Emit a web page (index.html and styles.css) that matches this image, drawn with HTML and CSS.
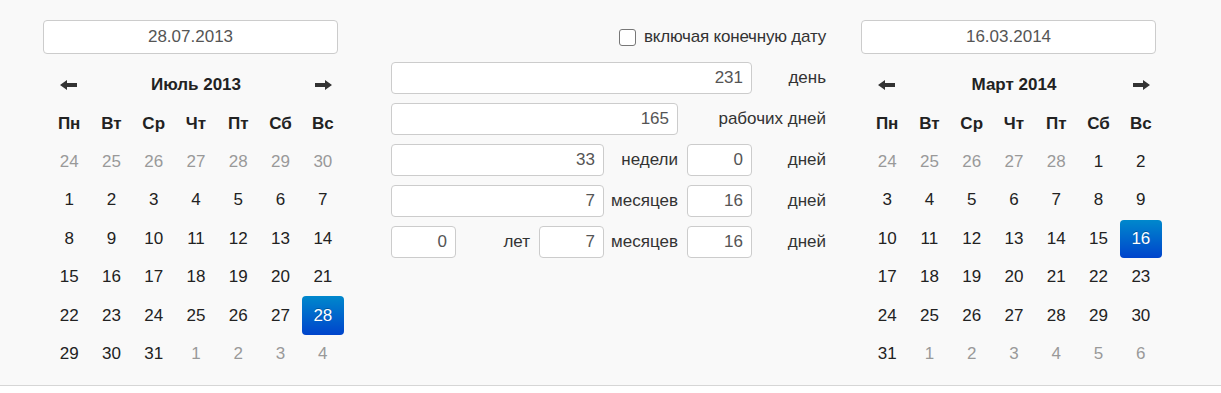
FILE: index.html
```html
<!DOCTYPE html>
<html>
<head>
  <title>Калькулятор дат</title>
  <link rel="stylesheet" href="styles.css">
</head>
<body>
  <div class="panel">
    <div class="cal-col">
      <input class="date-input" type="text" value="28.07.2013">
      <table class="calendar">
        <thead>
          <tr>
            <th class="nav"><svg width="18" height="10" viewBox="0 0 18 10"><path d="M0 5 L7 0 L7 3 L17 3 L17 7 L7 7 L7 10 Z" fill="#333"/></svg></th>
            <th class="switch" colspan="5">Июль 2013</th>
            <th class="nav"><svg width="18" height="10" viewBox="0 0 18 10"><path d="M18 5 L11 0 L11 3 L1 3 L1 7 L11 7 L11 10 Z" fill="#333"/></svg></th>
          </tr>
          <tr class="dow">
            <th>Пн</th><th>Вт</th><th>Ср</th><th>Чт</th><th>Пт</th><th>Сб</th><th>Вс</th>
          </tr>
        </thead>
        <tbody>
          <tr><td class="old">24</td><td class="old">25</td><td class="old">26</td><td class="old">27</td><td class="old">28</td><td class="old">29</td><td class="old">30</td></tr>
          <tr><td>1</td><td>2</td><td>3</td><td>4</td><td>5</td><td>6</td><td>7</td></tr>
          <tr><td>8</td><td>9</td><td>10</td><td>11</td><td>12</td><td>13</td><td>14</td></tr>
          <tr><td>15</td><td>16</td><td>17</td><td>18</td><td>19</td><td>20</td><td>21</td></tr>
          <tr><td>22</td><td>23</td><td>24</td><td>25</td><td>26</td><td>27</td><td class="active">28</td></tr>
          <tr><td>29</td><td>30</td><td>31</td><td class="old">1</td><td class="old">2</td><td class="old">3</td><td class="old">4</td></tr>
        </tbody>
      </table>
    </div>

    <div class="mid-col">
      <div class="check-row">
        <label class="check-label"><span class="checkbox"></span>включая конечную дату</label>
      </div>
      <div class="result-grid">
        <input class="num span5" type="text" value="231">
        <span class="unit">день</span>

        <input class="num span4" type="text" value="165">
        <span class="unit span2">рабочих дней</span>

        <input class="num span3" type="text" value="33">
        <span class="unit">недели</span>
        <input class="num" type="text" value="0">
        <span class="unit">дней</span>

        <input class="num span3" type="text" value="7">
        <span class="unit">месяцев</span>
        <input class="num" type="text" value="16">
        <span class="unit">дней</span>

        <input class="num" type="text" value="0">
        <span class="unit">лет</span>
        <input class="num" type="text" value="7">
        <span class="unit">месяцев</span>
        <input class="num" type="text" value="16">
        <span class="unit">дней</span>
      </div>
    </div>

    <div class="cal-col">
      <input class="date-input" type="text" value="16.03.2014">
      <table class="calendar">
        <thead>
          <tr>
            <th class="nav"><svg width="18" height="10" viewBox="0 0 18 10"><path d="M0 5 L7 0 L7 3 L17 3 L17 7 L7 7 L7 10 Z" fill="#333"/></svg></th>
            <th class="switch" colspan="5">Март 2014</th>
            <th class="nav"><svg width="18" height="10" viewBox="0 0 18 10"><path d="M18 5 L11 0 L11 3 L1 3 L1 7 L11 7 L11 10 Z" fill="#333"/></svg></th>
          </tr>
          <tr class="dow">
            <th>Пн</th><th>Вт</th><th>Ср</th><th>Чт</th><th>Пт</th><th>Сб</th><th>Вс</th>
          </tr>
        </thead>
        <tbody>
          <tr><td class="old">24</td><td class="old">25</td><td class="old">26</td><td class="old">27</td><td class="old">28</td><td>1</td><td>2</td></tr>
          <tr><td>3</td><td>4</td><td>5</td><td>6</td><td>7</td><td>8</td><td>9</td></tr>
          <tr><td>10</td><td>11</td><td>12</td><td>13</td><td>14</td><td>15</td><td class="active">16</td></tr>
          <tr><td>17</td><td>18</td><td>19</td><td>20</td><td>21</td><td>22</td><td>23</td></tr>
          <tr><td>24</td><td>25</td><td>26</td><td>27</td><td>28</td><td>29</td><td>30</td></tr>
          <tr><td>31</td><td class="old">1</td><td class="old">2</td><td class="old">3</td><td class="old">4</td><td class="old">5</td><td class="old">6</td></tr>
        </tbody>
      </table>
    </div>
  </div>
</body>
</html>
```

FILE: styles.css
```css
body {
  margin: 0;
  background-color: #fff;
  font-family: "Liberation Sans", Arial, sans-serif;
  font-size: 17px;
  color: #333;
}

.panel {
  display: flex;
  height: 365px;
  padding: 20px 0 0 43px;
  background-color: #f9f9f9;
  border-bottom: 1px solid #d6d6d6;
  box-shadow: 0 1px 2px rgba(0, 0, 0, 0.06);
}

input {
  font-family: inherit;
  font-size: 17px;
  color: #555;
  background-color: #fff;
  border: 1px solid #ccc;
  border-radius: 4px;
  box-sizing: border-box;
  margin: 0;
  outline: none;
}

/* calendars */
.cal-col {
  width: 301px;
}

.cal-col + .mid-col {
  margin-left: 47px;
}

.mid-col + .cal-col {
  margin-left: 35px;
}

.date-input {
  display: block;
  width: 295px;
  height: 34px;
  text-align: center;
  padding: 0 6px;
}

.calendar {
  margin: 12px 0 0 5px;
  width: 296px;
  border-collapse: collapse;
  table-layout: fixed;
}

.calendar th,
.calendar td {
  height: 38.4px;
  padding: 0;
  text-align: center;
}

.calendar th {
  font-weight: bold;
  color: #222;
}

.calendar .nav svg {
  display: block;
  margin: 0 auto;
}

.calendar td {
  color: #222;
}

.calendar td.old {
  color: #999;
}

.calendar td.active {
  color: #fff;
  border-radius: 4px;
  background-color: #0055cc;
  background-image: linear-gradient(to bottom, #0088cc, #0044cc);
  text-shadow: 0 -1px 0 rgba(0, 0, 0, 0.25);
}

/* results */
.mid-col {
  width: 435px;
}

.check-row {
  height: 34px;
  display: flex;
  align-items: center;
  justify-content: flex-end;
}

.check-label {
  display: flex;
  align-items: center;
  color: #333;
  letter-spacing: -0.2px;
}

.checkbox {
  width: 17px;
  height: 17px;
  box-sizing: border-box;
  border: 1px solid #777;
  border-radius: 3px;
  background-color: #fff;
  margin-right: 8px;
}

.result-grid {
  margin-top: 8px;
  display: grid;
  grid-template-columns: repeat(6, 65px);
  grid-auto-rows: 32px;
  column-gap: 9px;
  row-gap: 9px;
}

.num {
  height: 32px;
  width: 100%;
  text-align: right;
  padding: 0 8px;
}

.span2 { grid-column: span 2; }
.span3 { grid-column: span 3; }
.span4 { grid-column: span 4; }
.span5 { grid-column: span 5; }

.unit {
  display: flex;
  align-items: center;
  justify-content: flex-end;
  white-space: nowrap;
  color: #333;
}
```
